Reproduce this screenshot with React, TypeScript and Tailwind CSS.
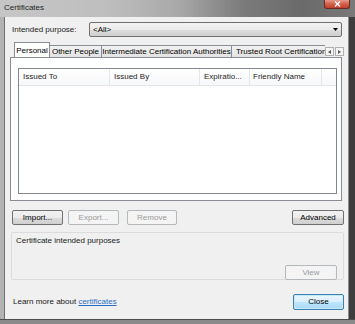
import React from "react";

const btn =
  "h-[15px] rounded-[2px] border border-[#707070] bg-[linear-gradient(180deg,#f2f2f2_0%,#ebebeb_50%,#dddddd_51%,#cfcfcf_100%)] flex items-center justify-center text-black shrink-0";
const btnDis =
  "h-[15px] rounded-[2px] border border-[#b5b8ba] bg-[#f4f4f4] flex items-center justify-center text-[#9a9a9a] shrink-0";

export default function App() {
  return (
    <div className="w-[355px] h-[324px] overflow-hidden flex flex-col bg-[#4a4a4a] text-[8px] leading-none text-black font-['Liberation_Sans',Arial,sans-serif]">
      {/* title bar */}
      <div className="h-[17px] shrink-0 relative bg-[linear-gradient(90deg,#c6c6c6_0%,#bebebe_30%,#a9a9a9_50%,#7c7c7c_68%,#6a6a6a_85%,#7a7a7a_100%)]">
        <span className="absolute left-[4px] top-[4px] text-[8px] text-[#1e1e1e]">Certificates</span>
        <div className="absolute right-[5px] top-0 w-[26px] h-[9px] rounded-b-[3px] border border-t-0 border-[#6b2a20] bg-[linear-gradient(180deg,#e59a8a_0%,#d4604a_50%,#c0402c_100%)] flex items-center justify-center">
          <svg width="7" height="6" viewBox="0 0 7 6">
            <path d="M1 0.5 L6 5.5 M6 0.5 L1 5.5" stroke="#ffffff" strokeWidth="1.4" />
          </svg>
        </div>
      </div>

      {/* body */}
      <div className="flex h-[302px] shrink-0">
        <div className="w-[5px] shrink-0 bg-[#b3b3b3] border-r border-[#6e6e6e]" />
        <div className="w-[343px] shrink-0 bg-[#f0f0f0] flex flex-col">
          {/* intended purpose */}
          <div className="mt-[5px] h-[15px] flex items-center">
            <span className="ml-[7px] w-[77px] text-[#1a1a1a]">Intended purpose:</span>
            <div className="w-[253px] h-[15px] rounded-[2px] border border-[#707070] bg-[linear-gradient(180deg,#f2f2f2_0%,#ebebeb_50%,#dddddd_51%,#cfcfcf_100%)] flex items-center justify-between px-[3px]">
              <span>&lt;All&gt;</span>
              <svg width="5" height="3" viewBox="0 0 5 3">
                <path d="M0 0 H5 L2.5 3 Z" fill="#000" />
              </svg>
            </div>
          </div>

          {/* tabs */}
          <div className="mt-[5px] h-[15px] flex items-end">
            <div className="ml-[9px] w-[311px] h-[15px] overflow-hidden flex items-end">
              <div className="w-[36px] h-[16px] shrink-0 bg-white border border-b-0 border-[#898c95] flex items-center justify-center relative z-10 mb-[-1px]">
                Personal
              </div>
              <div className="w-[52px] h-[12px] shrink-0 border border-l-0 border-b-0 border-[#898c95] bg-[linear-gradient(180deg,#f2f2f2,#e3e3e3)] flex items-center justify-center">
                Other People
              </div>
              <div className="w-[130px] h-[12px] shrink-0 border border-l-0 border-b-0 border-[#898c95] bg-[linear-gradient(180deg,#f2f2f2,#e3e3e3)] flex items-center justify-center whitespace-nowrap">
                Intermediate Certification Authorities
              </div>
              <div className="w-[130px] h-[12px] shrink-0 border border-l-0 border-b-0 border-[#898c95] bg-[linear-gradient(180deg,#f2f2f2,#e3e3e3)] flex items-center pl-[4px] whitespace-nowrap">
                Trusted Root Certification Authorities
              </div>
            </div>
            <div className="flex gap-[1px] mb-[1px]">
              <div className="w-[9px] h-[9px] border border-[#b0b0b0] bg-[#f4f4f4] flex items-center justify-center">
                <svg width="3" height="4" viewBox="0 0 3 4"><path d="M3 0 V4 L0 2 Z" fill="#555" /></svg>
              </div>
              <div className="w-[9px] h-[9px] border border-[#b0b0b0] bg-[#f4f4f4] flex items-center justify-center">
                <svg width="3" height="4" viewBox="0 0 3 4"><path d="M0 0 V4 L3 2 Z" fill="#555" /></svg>
              </div>
            </div>
          </div>

          {/* tab panel */}
          <div className="ml-[5px] w-[332px] h-[144px] border border-[#898c95] bg-white flex flex-col">
            <div className="mt-[10px] ml-[7px] w-[319px] h-[126px] border border-[#828790] bg-white flex flex-col">
              <div className="h-[17px] flex items-stretch border-b border-[#e5e5e5] bg-[linear-gradient(180deg,#ffffff,#f7f8fa)] text-[#1e1e1e]">
                <div className="w-[91px] pl-[4px] flex items-center border-r border-[#e3e6ea]">Issued To</div>
                <div className="w-[90px] pl-[4px] flex items-center border-r border-[#e3e6ea]">Issued By</div>
                <div className="w-[50px] pl-[4px] flex items-center border-r border-[#e3e6ea] whitespace-nowrap">Expiratio...</div>
                <div className="w-[72px] pl-[3px] flex items-center border-r border-[#e3e6ea] whitespace-nowrap">Friendly Name</div>
              </div>
            </div>
          </div>

          {/* buttons */}
          <div className="mt-[9px] flex items-center">
            <div className={`${btn} ml-[7px] w-[51px]`}>Import...</div>
            <div className={`${btnDis} ml-[5px] w-[51px]`}>Export...</div>
            <div className={`${btnDis} ml-[8px] w-[50px]`}>Remove</div>
            <div className={`${btn} ml-auto mr-[4px] w-[52px]`}>Advanced</div>
          </div>

          {/* group */}
          <div className="mt-[7px] ml-[6px] w-[333px] h-[48px] border border-[#dcdcdc] rounded-[2px] flex flex-col">
            <span className="mt-[4px] ml-[4px] text-[#1a1a1a]">Certificate intended purposes</span>
            <div className={`${btnDis} mt-[20px] ml-auto mr-[6px] w-[52px]`}>View</div>
          </div>

          {/* footer */}
          <div className="mt-[14px] h-[16px] flex items-center">
            <span className="ml-[8px] text-[#1a1a1a]">
              Learn more about{" "}
              <span className="text-[#2a6fc4] underline">certificates</span>
            </span>
            <div className="ml-auto mr-[4px] w-[51px] h-[16px] rounded-[2px] border border-[#3c7fb1] bg-[linear-gradient(180deg,#eaf6fd_0%,#d9f0fc_50%,#bee6fd_51%,#a7d9f5_100%)] shadow-[inset_0_0_0_1px_#c6e9f9] flex items-center justify-center">
              Close
            </div>
          </div>
        </div>
        <div className="flex-1 bg-[#3e3e3e] border-l border-[#8c8c8c]" />
      </div>
      <div className="h-[5px] shrink-0 bg-[#8a8a8a] border-t border-[#4e4e4e]" />
    </div>
  );
}
